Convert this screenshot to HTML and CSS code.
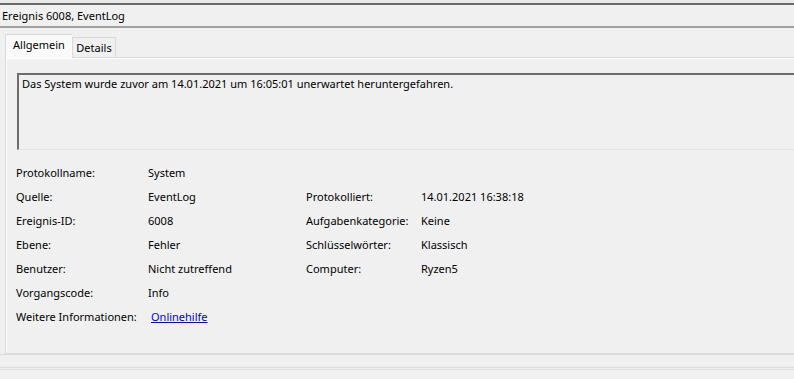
FILE: index.html
```html
<!DOCTYPE html>
<html lang="de">
<head>
    <meta charset="UTF-8">
    <title>Ereignis 6008, EventLog</title>
    <link rel="stylesheet" href="styles.css">
</head>
<body>
    <div class="top-strip"></div>
    <div class="title-bar">Ereignis 6008, EventLog</div>
    <div class="tab-area">
        <div class="tabs">
            <span class="tab active">Allgemein</span>
            <span class="tab">Details</span>
        </div>
        <div class="panel">
            <div class="message">Das System wurde zuvor am 14.01.2021 um 16:05:01 unerwartet heruntergefahren.</div>
            <div class="props">
                <span>Protokollname:</span><span>System</span><span></span><span></span>
                <span>Quelle:</span><span>EventLog</span><span>Protokolliert:</span><span>14.01.2021 16:38:18</span>
                <span>Ereignis-ID:</span><span>6008</span><span>Aufgabenkategorie:</span><span>Keine</span>
                <span>Ebene:</span><span>Fehler</span><span>Schlüsselwörter:</span><span>Klassisch</span>
                <span>Benutzer:</span><span>Nicht zutreffend</span><span>Computer:</span><span>Ryzen5</span>
                <span>Vorgangscode:</span><span>Info</span><span></span><span></span>
                <span>Weitere Informationen:</span><span><a class="link" href="#">Onlinehilfe</a></span><span></span><span></span>
            </div>
        </div>
    </div>
    <div class="footer-lines"></div>
</body>
</html>
```

FILE: styles.css
```css
body {
    margin: 0;
    background-color: #f0f0f0;
    font-family: "Noto Sans", sans-serif;
    font-size: 11px;
    color: #000;
    overflow: hidden;
}
.top-strip {
    height: 3px;
    background-color: #e8e8e8;
    border-bottom: 2px solid #6a6a6a;
}
.title-bar {
    height: 21px;
    line-height: 21px;
    padding-left: 2px;
    border-bottom: 2px solid #a0a0a0;
}
.tab-area {
    padding: 6px 0 0 5px;
}
.tabs {
    display: flex;
    align-items: flex-end;
    height: 23px;
}
.tab {
    box-sizing: border-box;
    width: 44px;
    height: 20px;
    line-height: 19px;
    text-align: center;
    border: 1px solid #d9d9d9;
    border-bottom: none;
    background-color: #f0f0f0;
}
.tab.active {
    width: 67px;
    height: 24px;
    line-height: 19px;
    background-color: #fafafa;
    border-right: none;
    position: relative;
    z-index: 1;
    margin-bottom: -1px;
}
.panel {
    height: 280px;
    border: 1px solid #d9d9d9;
    border-right: none;
    padding: 15px 0 0 11px;
    box-shadow: inset 1px 1px 0 #fff;
}
.message {
    height: 73px;
    padding: 1px 0 0 3px;
    border-top: 2px solid #6d6d6d;
    border-left: 2px solid #6d6d6d;
    border-bottom: 1px solid #e3e3e3;
}
.props {
    display: grid;
    grid-template-columns: 132px 158px 115px auto;
    grid-auto-rows: 24px;
    margin-top: 14px;
    margin-left: -1px;
}
.props span {
    line-height: 18px;
}
.link {
    margin-left: 3px;
    color: #0000e0;
    text-decoration: underline;
}
.footer-lines {
    height: 12px;
    border-top: 1px solid #dcdcdc;
    border-bottom: 3px double #dcdcdc;
}
```
